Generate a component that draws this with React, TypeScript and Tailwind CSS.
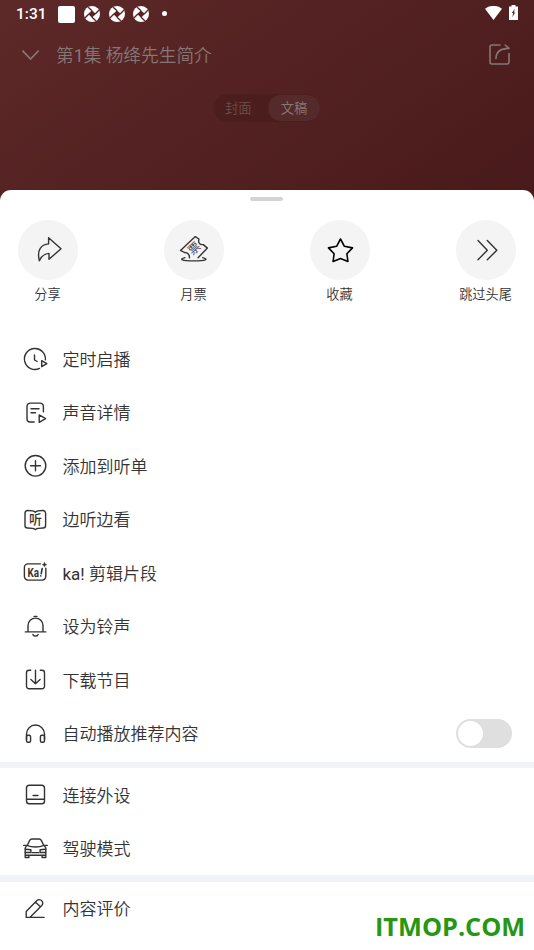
import type { ReactNode } from 'react'

const cjk = "font-[Roboto,'Noto_Sans_CJK_SC',sans-serif]"

function Icon({ children, size = 24 }: { children: ReactNode; size?: number }) {
  return (
    <svg
      width={size}
      height={size}
      viewBox={`0 0 ${size} ${size}`}
      fill="none"
      stroke="currentColor"
      strokeWidth="1.4"
      strokeLinecap="round"
      strokeLinejoin="round"
      className="shrink-0 overflow-visible"
    >
      {children}
    </svg>
  )
}

const actions = [
  {
    label: '分享',
    icon: (
      <path d="M15.6 2.8 28 13.7 16 24.3v-5.9c-4.8.2-7.4 2.6-9.6 7.4C3.6 15.5 8 9.3 15.6 8.9Z" />
    ),
  },
  {
    label: '月票',
    icon: (
      <>
        <path d="M10.4 22.9c.3-3.5-1.6-5.3-4.9-5.4L1.5 15.4 16.3 1.6l3.600 2.400c-1 3.800.8 6 4.400 5.600l4.100 3.500-9.300 9.600" />
        <path d="M6 22.600c-6 1.600-4 3.300 8.800 3.300s14.900-1.700 8.900-3.300" />
        <text x="15" y="17.600" fontSize="12" textAnchor="middle" fill="currentColor" stroke="none" transform="rotate(-42 15 13.300)">票</text>
      </>
    ),
  },
  {
    label: '收藏',
    icon: (
      <path
        className="stroke-black"
        strokeWidth="1.6"
        d="m15.500 4 3.900 7.300 8.100 1.600-5.600 5.900 1 7.600-7.400-2.800-7.400 2.800 1-7.600L3.500 12.900l8.100-1.600Z"
      />
    ),
  },
  { label: '跳过头尾', icon: <path d="m7 5.500 9.300 9.700L7 24.800M16.300 5.500l9.500 9.700-9.500 9.600" /> },
]

const mainItems = [
  {
    label: '定时启播',
    icon: (
      <>
        <path d="M22.400 12.800A10.500 10.500 0 1 0 16.500 21.400" />
        <path d="M11.500 8v5l2.700 1.500M18.700 13.700l5.100 3-5.100 3Z" />
      </>
    ),
  },
  {
    label: '声音详情',
    icon: (
      <>
        <path d="M20.400 10.900V5.500A3.400 3.400 0 0 0 17 2.100H7.400A3.400 3.400 0 0 0 4 5.500V18a3 3 0 0 0 3 3h4.200" />
        <path d="M8 7.700h8M8 11.700h4.500M16.200 13.900l6.400 3.700-6.400 3.700Z" />
      </>
    ),
  },
  {
    label: '添加到听单',
    icon: (
      <>
        <circle cx="12.500" cy="11.800" r="10.300" />
        <path d="M7.500 11.800h10M12.500 6.800v10" />
      </>
    ),
  },
  {
    label: '边听边看',
    icon: (
      <>
        <path d="M12.300 4.200C11 2.900 9.300 2.500 4.800 2.500A2.800 2.800 0 0 0 2 5.300v12.200A2.500 2.500 0 0 0 4.500 20c3.800 0 6.300.2 7.800 1.500 1.500-1.300 4-1.500 7.800-1.500a2.500 2.500 0 0 0 2.500-2.500V5.300a2.800 2.800 0 0 0-2.800-2.800c-4.500 0-6.200.4-7.500 1.700Z" />
        <text x="12.600" y="16.400" fontSize="13" fontWeight="500" textAnchor="middle" fill="currentColor" stroke="none">听</text>
      </>
    ),
  },
  {
    label: (
      <>
        <span className="font-normal">ka! </span>剪辑片段
      </>
    ),
    icon: (
      <>
        <path d="M17.400 2.900H4.900A3.500 3.500 0 0 0 1.400 6.400v9.200a3.500 3.500 0 0 0 3.500 3.500h14.400a3.500 3.500 0 0 0 3.500-3.500V7.200" />
        <path fill="currentColor" strokeWidth=".6" d="M21.500 1.600 22.200 3.100 23.700 3.700l-1.500.6-.7 1.500-.7-1.500-1.500-.6 1.500-.6Z" />
        <text x="4.400" y="15.600" fontSize="12" fontWeight="700" textLength="11.500" lengthAdjust="spacingAndGlyphs" fill="currentColor" stroke="none">Ka</text>
        <path strokeWidth="1.600" d="m19.200 7.500-1 5.200M17.800 14.900v.1" />
      </>
    ),
  },
  {
    label: '设为铃声',
    icon: (
      <path d="M2.300 16.900h20.500M5 16.700V10.600a7.500 7.500 0 0 1 15 0V16.700M11.100 1.400h2.800M9.900 19.600c1.200 2 4 2 5.200 0" />
    ),
  },
  {
    label: '下载节目',
    icon: (
      <path d="M7.700 2.300H6A2.500 2.500 0 0 0 3.500 4.800v13.400A2.500 2.500 0 0 0 6 20.700h13a2.500 2.500 0 0 0 2.500-2.500V4.800A2.500 2.500 0 0 0 19 2.300h-1.700M12.500 2.300v13.300M7.900 11.500l4.600 4.200 4.600-4.200" />
    ),
  },
  {
    label: '自动播放推荐内容',
    toggle: true,
    icon: (
      <>
        <path d="M3.500 17.500V12a9 9 0 0 1 18 0v5.500" />
        <rect x="3.500" y="13.300" width="4.100" height="6.900" rx="1.500" />
        <rect x="17.400" y="13.300" width="4.100" height="6.900" rx="1.500" />
      </>
    ),
  },
]

const deviceItems = [
  {
    label: '连接外设',
    icon: (
      <>
        <rect x="3.500" y="2.200" width="18" height="18.600" rx="2.800" />
        <path d="M3.600 16.200h17.800M10.100 12.500h4.800" />
      </>
    ),
  },
  {
    label: '驾驶模式',
    icon: (
      <>
        <path d="M4.200 8.500 6.700 3.400A2.500 2.500 0 0 1 8.900 2h7.200a2.500 2.500 0 0 1 2.200 1.400l2.500 5.100M.7 8.400h2.900c5.500 2 12.300 2 17.800 0h2.900M3.700 8.500 2.200 11v9.500h3.700v-2.300M21.300 8.500l1.500 2.500v9.500h-3.700v-2.300M2.200 18.200h20.600M9 15.600h7" />
        <path d="m2.300 12.200 5.600.6v2.700H2.300M22.700 12.200l-5.600.6v2.700h5.600" />
      </>
    ),
  },
]

function Row({ label, icon, toggle }: { label: ReactNode; icon: ReactNode; toggle?: boolean }) {
  return (
    <div className="flex h-[53.5px] items-center pr-[22px] pl-[23px]">
      <Icon>{icon}</Icon>
      <span className="ml-[15.5px] pt-px text-[17px] leading-6 whitespace-pre">{label}</span>
      {toggle && (
        <div className="ml-auto flex h-[29px] w-14 items-center rounded-full bg-[#dfdfdf] pl-0.5">
          <div className="size-[25px] rounded-full bg-white" />
        </div>
      )}
    </div>
  )
}

function Swirl() {
  return (
    <svg width="16" height="16" viewBox="0 0 16 16" className="shrink-0">
      <circle cx="8" cy="8" r="8" fill="#fff" />
      <path d="M8 4.200 11.800 8 8 11.800 4.200 8Z" fill="#572425" />
      <path d="M4.200 1.200 8 4.800M14.800 4.200 11.200 8M11.800 14.800 8 11.200M1.200 11.800 4.800 8" stroke="#572425" strokeWidth="1.300" />
    </svg>
  )
}

function StatusBar() {
  return (
    <div className="flex h-7 items-center pr-4 pl-4 text-white">
      <span className="w-[43px] pt-0.5 text-[15.500px] font-medium">1:31</span>
      <div className="-ml-px size-[17px] rounded-[2px] bg-white" />
      <div className="ml-[9px] flex gap-[8.500px]">
        <Swirl />
        <Swirl />
        <Swirl />
      </div>
      <div className="mb-px ml-[13px] size-[5px] rounded-full bg-white" />
      <svg width="17" height="14" viewBox="0 0 17 14" className="mt-px ml-auto mb-[3px]" fill="currentColor">
        <path d="M0 2.700C5-1 12-1 17 2.700L8.500 14Z" />
      </svg>
      <svg width="9" height="15" viewBox="0 0 9 15" className="mb-[3px] ml-[7px]">
        <path d="M2.500 0h4v1.500H9V15H0V1.500h2.500Z" fill="#fff" />
        <path d="M5.800 3.700 2.800 7.900h1.400l-.9 4.300 2.900-4.800H4.900Z" fill="#572425" />
      </svg>
    </div>
  )
}

export default function App() {
  return (
    <div className={`relative flex h-[950px] w-[534px] flex-col overflow-hidden bg-[linear-gradient(145deg,#5d2828_0px,#491a1b_462px)] font-[350] ${cjk}`}>
      <StatusBar />

      <div className="flex h-[54px] items-center pr-6 pl-[22px] text-[#857775]">
        <svg width="17" height="10" viewBox="0 0 17 10" fill="none" stroke="currentColor" strokeWidth="1.700">
          <path d="m.500.700 8.100 8.300L16.700.700" />
        </svg>
        <span className="ml-[17px] pt-px text-[17.700px] leading-6">
          第<span className="font-normal">1</span>集 杨绛先生简介
        </span>
        <svg width="21" height="21" viewBox="0 0 21 21" className="mb-px ml-auto" fill="none" stroke="currentColor" strokeWidth="1.600" strokeLinecap="round" strokeLinejoin="round">
          <path d="M11 1H3a2 2 0 0 0-2 2v15a2 2 0 0 0 2 2h15a2 2 0 0 0 2-2V9.500" />
          <path d="M7 14.500C7 8.500 11 4.500 20 4.400L16.200 1" />
        </svg>
      </div>

      <div className="mt-3 ml-[214px] flex h-7 w-[106px] items-center rounded-full bg-[#4b1d1d] text-[13.300px]">
        <span className="w-[54px] pt-px pl-[11px] text-[#6c4d4b]">封面</span>
        <span className="flex h-[26px] w-[52px] items-center justify-center rounded-full bg-[#552a2a] pt-px text-[#8c7977]">文稿</span>
      </div>

      <div className="mt-[68px] flex flex-1 flex-col rounded-t-[11px] bg-white text-[#333]">
        <div className="mt-[7px] ml-[250px] h-1 w-[33px] shrink-0 rounded-full bg-[#d3d3d3]" />

        <div className="mt-[19.400px] flex justify-between px-[18px]">
          {actions.map((action) => (
            <div key={action.label} className="flex w-[60px] flex-col items-center">
              <div className="flex size-[60px] items-center justify-center rounded-full bg-[#f4f4f4]">
                <Icon size={30}>{action.icon}</Icon>
              </div>
              <span className="mt-[4.600px] mr-px text-[13.200px] leading-5 whitespace-nowrap">{action.label}</span>
            </div>
          ))}
        </div>

        <div className="mt-[27.500px]">
          {mainItems.map((item, i) => (
            <Row key={i} {...item} />
          ))}
        </div>

        <div className="mt-[1.500px] h-[6.500px] shrink-0 bg-[#f0f4f8]" />
        <div>
          {deviceItems.map((item) => (
            <Row key={item.label} {...item} />
          ))}
        </div>
        <div className="h-[6.500px] shrink-0 bg-[#f0f4f8]" />
        <Row
          label="内容评价"
          icon={
            <path d="M3.200 20.400h17.900M3.200 20.300v-5.700L13.900 3.600a3.300 3.300 0 0 1 2.400-1 3.500 3.500 0 0 1 2.500 5.900L7.100 20.300M12.600 5.200l4.800 4.600" />
          }
        />
      </div>

      <div className="absolute top-[908px] left-[375px] font-['Open_Sans',sans-serif] text-[25.300px] leading-9 font-bold text-[#279612]">
        ITMOP.COM
      </div>
    </div>
  )
}
